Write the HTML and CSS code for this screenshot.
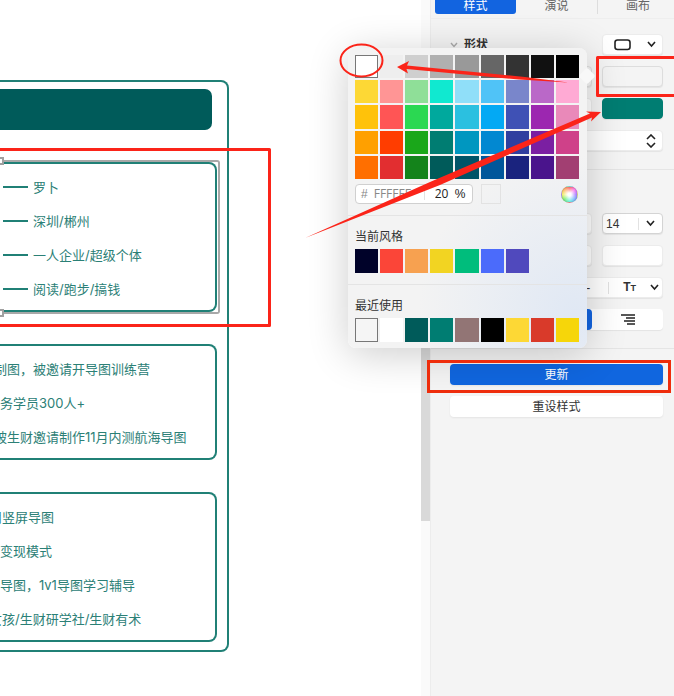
FILE: index.html
```html
<!DOCTYPE html>
<html lang="zh-CN">
<head>
<meta charset="utf-8">
<title>样式</title>
<link rel="stylesheet" href="styles.css">
</head>
<body>
<div class="app">
  <main class="canvas">
    <section class="map">
      <div class="map-title"></div>
      <ul class="card selected">
        <li><i class="branch"></i>罗卜</li>
        <li><i class="branch"></i>深圳/郴州</li>
        <li><i class="branch"></i>一人企业/超级个体</li>
        <li><i class="branch"></i>阅读/跑步/搞钱</li>
      </ul>
      <ul class="card">
        <li class="cut-half">制图，被邀请开导图训练营</li>
        <li>务学员300人+</li>
        <li class="cut-half">被生财邀请制作11月内测航海导图</li>
      </ul>
      <ul class="card">
        <li class="cut-most">用竖屏导图</li>
        <li>变现模式</li>
        <li>导图，1v1导图学习辅导</li>
        <li class="cut-most">女孩/生财研学社/生财有术</li>
      </ul>
    </section>
  </main>
  <div class="scrollbar"><div class="thumb"></div></div>

  <aside class="panel">
    <nav class="tabs">
      <button class="tab active">样式</button>
      <button class="tab">演说</button>
      <button class="tab">画布</button>
    </nav>
    <section class="group">
      <div class="row">
        <h2><svg width="8" height="6" viewBox="0 0 8 6"><path d="M1 1l3 3.500L7 1"/></svg>形状</h2>
        <button class="field end shape" aria-label="形状">
          <svg width="18" height="12" viewBox="0 0 18 12"><rect x="1" y="1" width="15" height="9.500" rx="2.500"/></svg>
          <svg width="9" height="7" viewBox="0 0 9 7"><path d="M1 1l3.500 4L8 1"/></svg>
        </button>
      </div>
      <div class="row"><button class="field mid soft" aria-label="填充样式"></button><button class="field end soft" aria-label="填充颜色"></button></div>
      <div class="row"><button class="field mid" aria-label="边框样式"></button><button class="field end teal" aria-label="边框颜色"></button></div>
      <div class="row"><button class="field wide stepper" aria-label="边框粗细"><svg width="10" height="14" viewBox="0 0 10 14"><path d="M1 5l4-4 4 4M1 9l4 4 4-4"/></svg></button></div>
    </section>
    <section class="group text-group">
      <div class="row"><button class="field mid" aria-label="字体"></button>
        <button class="field end size" aria-label="字号"><span>14</span><i class="bar"></i><svg width="9" height="7" viewBox="0 0 9 7"><path d="M1 1l3.500 4L8 1"/></svg></button></div>
      <div class="row"><button class="field mid" aria-label="字重"></button><button class="field end" aria-label="文字颜色"></button></div>
      <div class="row"><div class="field wide styles">
        <button aria-label="删除线">-</button><i class="bar"></i>
        <button class="case" aria-label="大小写">T<small>T</small></button>
        <svg width="9" height="7" viewBox="0 0 9 7"><path d="M1 1l3.500 4L8 1"/></svg></div></div>
      <div class="row"><div class="field wide aligns">
        <button class="on" aria-label="居中"></button>
        <button aria-label="右对齐"><svg width="14" height="11" viewBox="0 0 14 11"><path d="M0 1h14M5 4h9M3 7h11M6 10h8"/></svg></button></div></div>
    </section>
    <section class="group actions">
      <button class="action primary">更新</button>
      <button class="action">重设样式</button>
    </section>
  </aside>

  <div class="popover">
    <i class="notch"></i>
    <div class="pop-body">
    <div class="swatches palette" id="palette"></div>
    <div class="hex-row">
      <div class="hex"><label for="hex">#</label><input id="hex" value="FFFFFF"><i class="bar"></i><input class="pct" aria-label="不透明度" value="20"><span>%</span></div>
      <i class="preview"></i>
      <button class="wheel" aria-label="更多颜色"></button>
    </div>
    <hr>
    <h3>当前风格</h3>
    <div class="swatches" id="theme"></div>
    <hr>
    <h3>最近使用</h3>
    <div class="swatches" id="recent"></div>
    </div>
  </div>

  <svg class="marks" width="1" height="1" viewBox="0 0 1 1">
    <g class="boxes">
      <path d="M-4 149.500H269.500V325.500H-4"/>
      <path d="M680 57.500H597.500V95.500H680"/>
      <path class="square" d="M428.500 361.500H669.500V391.500H428.500Z"/>
    </g>
    <ellipse cx="361.500" cy="60.500" rx="21" ry="16"/>
    <path class="arrow" d="M397 67L409 61 407 65.500 525 77 568 82.500 519 79.500 406.500 69 408 73.500Z"/>
    <path class="arrow" d="M601 112L591 121.500 592 117.500 440 185 305 238 430 182 590 113.500 586 111.500Z"/>
  </svg>
</div>
<script src="script.js"></script>
</body>
</html>
```
FILE: styles.css
```css
* { box-sizing: border-box; }
body {
  margin: 0;
  overflow: hidden;
  font: 12px/20px "Liberation Sans", "Noto Sans CJK SC", sans-serif;
  color: #333;
  background: #fff;
}
button, input { font: inherit; color: inherit; border: 0; padding: 0; margin: 0; background: none; }
svg { fill: none; stroke: #222; stroke-width: 1.600; flex: none; }
ul { list-style: none; margin: 0; }
.app { position: relative; display: flex; min-height: 100vh; }

/* Mind map */
.canvas { flex: 0 0 421px; padding-top: 80px; overflow: hidden; }
.map {
  width: 229px;
  display: flex;
  flex-direction: column;
  gap: 32px;
  padding: 7px 10px 8px 0;
  border: 2px solid #208076;
  border-left: 0;
  border-radius: 0 8px 8px 0;
}
.map-title { height: 41px; margin-right: 5px; border-radius: 0 7px 7px 0; background: #005b5a; }
.card {
  position: relative;
  padding: 6px 0 4px;
  border: 2px solid #208076;
  border-left: 0;
  border-radius: 0 8px 8px 0;
  font: 13px/34px Inter, "Noto Sans CJK SC", sans-serif;
  color: #2b8076;
}
.card li { display: flex; align-items: center; height: 34px; white-space: nowrap; }
.cut-half { margin-left: -6px; }
.cut-most { margin-left: -11px; }
.branch { width: 25px; height: 2px; margin: 0 5px 0 3px; background: #208076; }
.selected::after {
  content: "";
  position: absolute;
  inset: -4px -5px -4px 0;
  border: 2px solid #a8a8a8;
  border-left: 0;
  border-radius: 0 3px 3px 0;
}
.selected::before {
  content: "";
  position: absolute;
  z-index: 1;
  left: -4px;
  top: -7px;
  bottom: -7px;
  width: 8px;
  background:
    linear-gradient(#fff, #fff) 0 2px / 6px 4px no-repeat,
    linear-gradient(#a0a0a0, #a0a0a0) 0 0 / 8px 8px no-repeat,
    linear-gradient(#fff, #fff) 0 calc(100% - 2px) / 6px 4px no-repeat,
    linear-gradient(#a0a0a0, #a0a0a0) 0 100% / 8px 8px no-repeat;
}

.scrollbar { flex: 0 0 10px; background: #fafafa; border-right: 1px solid #ececec; }
.thumb { height: 321px; margin-top: 200px; background: #d9d9d9; }

/* Format panel */
.panel { flex: 1; min-width: 0; background: #f4f4f4; }
.tabs {
  display: grid;
  grid-template-columns: repeat(3, 1fr);
  height: 19px;
  padding-left: 4px;
  margin-right: -4px;
  border-bottom: 1px solid #eee;
}
.tab { height: 14px; line-height: 12px; padding-bottom: 3px; color: #666; border-radius: 0 0 3px 3px; }
.tab + .tab + .tab { border-left: 1px solid #ddd; border-radius: 0; }
.tab.active { color: #fff; background: #1264e0; }
.group {
  display: flex;
  flex-direction: column;
  gap: 11px;
  padding: 15px 11px 18px 19px;
  border-bottom: 1px solid #e5e5e5;
}
.text-group { padding-top: 43px; }
.actions { border: 0; }
.row { display: flex; justify-content: flex-end; gap: 10px; height: 21px; }
h2 { flex: 1; display: flex; align-items: center; gap: 6px; margin: 0; font-size: 12px; line-height: 20px; }
h2 svg { stroke: #aaa; stroke-width: 1.400; }
.field {
  display: flex;
  align-items: center;
  justify-content: center;
  border-radius: 4px;
  background: #fff;
  border: 1px solid #ececec;
  box-shadow: 0 1px 1px #0001;
}
.end { width: 61px; }
.mid { width: 61px; }
.wide { flex: 1; }
.soft { background: #f4f4f4; border-color: #ddd; }
.teal { background: #007d72; border-color: #007d72; }
.shape { justify-content: space-between; padding: 0 6px 0 11px; }
.stepper { justify-content: flex-end; padding-right: 6px; }
.bar { width: 1px; height: 12px; background: #e2e2e2; }
.size { justify-content: space-between; padding: 0 7px 0 3px; border-color: #d4d4d4; }
.size .bar { margin-left: 12px; }
.styles { justify-content: flex-end; padding-right: 3px; }
.styles .bar { margin: 0 14px 0 18px; }
.styles svg { margin-left: 14px; }
.case { font-weight: 700; line-height: 18px; }
.case small { font-size: 9px; }
.aligns { border: 0; justify-content: flex-end; }
.aligns button { width: 71px; height: 21px; display: grid; place-items: center; }
.aligns svg { stroke-width: 1.300; }
.aligns .on { background: #1264e0; border-radius: 0 4px 4px 0; }
.action { height: 21px; border-radius: 4px; background: #fff; line-height: 20px; box-shadow: 0 1px 2px #0001; }
.primary { color: #fff; background: #1066df; }

/* Colour picker */
.popover {
  position: absolute;
  left: 348px;
  top: 48px;
  width: 239px;
  border-radius: 8px;
  background: radial-gradient(circle at 95% 88%, #e0e8f4, #f3f3f3 45%);
  box-shadow: 0 6px 40px #0003;
}
.pop-body { padding: 7px 7px 6px; }
.notch { position: absolute; right: -6px; top: 22px; width: 12px; height: 12px; border-radius: 2px; background: #f8f8f8; transform: rotate(45deg); }
.swatches { display: grid; grid-template-columns: repeat(9, 1fr); gap: 2px; padding-right: 1px; }
.swatches button { height: 24px; }
.palette { height: 124px; grid-template-rows: repeat(5, 1fr); }
.palette button { height: auto; }
.swatches .outlined { border: 1px solid #777; }
.hex-row { display: flex; align-items: center; gap: 8px; height: 20px; margin: 5px 0 11px; }
.hex {
  display: flex;
  align-items: center;
  width: 118px;
  height: 20px;
  padding: 0 5px;
  border: 1px solid #d0d0d0;
  border-radius: 4px;
  background: #fff;
  color: #888;
}
.hex input { width: 46px; height: 18px; margin-left: 6px; font: 12px/18px "Open Sans", sans-serif; }
.hex .pct { width: 16px; margin-left: 10px; color: #222; }
.hex span { margin-left: 4px; color: #222; }
.hex .bar { margin-left: 4px; }
.preview { width: 20px; height: 20px; border: 1px solid #e2e2e2; }
.wheel {
  width: 17px;
  height: 17px;
  margin: 0 2px 0 auto;
  border-radius: 50%;
  border: 1px solid #9996;
  background: radial-gradient(#fff 15%, #fff0 75%), conic-gradient(#f55, #f6e, #96f, #6af, #5ed, #6e6, #ee5, #fa5, #f55);
}
hr { height: 1px; margin: 0 -7px; border: 0; background: #e4e4e4; }
h3 { margin: 11px 0 2px; font-size: 12px; line-height: 20px; font-weight: 400; }
#theme { margin-bottom: 11px; }

/* Callout marks */
.marks { position: absolute; left: 0; top: 0; overflow: visible; pointer-events: none; stroke: #fb2419; stroke-width: 2; }
.boxes { stroke-width: 3; stroke-linejoin: round; }
.square { stroke: #ee2d0c; stroke-linejoin: miter; }
.arrow { fill: #fb2419; stroke: none; }
```
FILE: script.js
```js
const sets = {
  palette: `#ffffff #eeeeee #cfcfcf #b0b0b0 #999999 #666666 #333333 #111111 #000000
    #fdd835 #ff9595 #8fdf98 #10e9d0 #90dff9 #50c3f7 #7986cb #ba68c8 #ffaad4
    #ffc20a #ff5555 #2bd852 #00a99d #2bc0e0 #03a9f4 #3f51b5 #9c27b0 #e989b9
    #ffa000 #ff3d00 #1aa71a #007d72 #0097c0 #0288d1 #303f9f #7b1fa2 #cf4189
    #ff6f00 #e22e30 #14831b #005b5a #005468 #01579b #1a237e #4a148c #a23f72`,
  theme: '#000229 #fb4538 #f7a150 #f2d422 #00bd7c #4b6bfb #5049bd',
  recent: '#f5f5f5 #ffffff #005b5a #007d72 #927575 #000000 #fdd835 #d93a2a #f6d60a'
};
for (const [id, list] of Object.entries(sets)) {
  const box = document.getElementById(id);
  list.split(/\s+/).forEach((color, i) => {
    const b = document.createElement('button');
    b.style.backgroundColor = color;
    b.setAttribute('aria-label', color);
    if (i === 0 && id !== 'theme') b.className = 'outlined';
    box.append(b);
  });
}
```
